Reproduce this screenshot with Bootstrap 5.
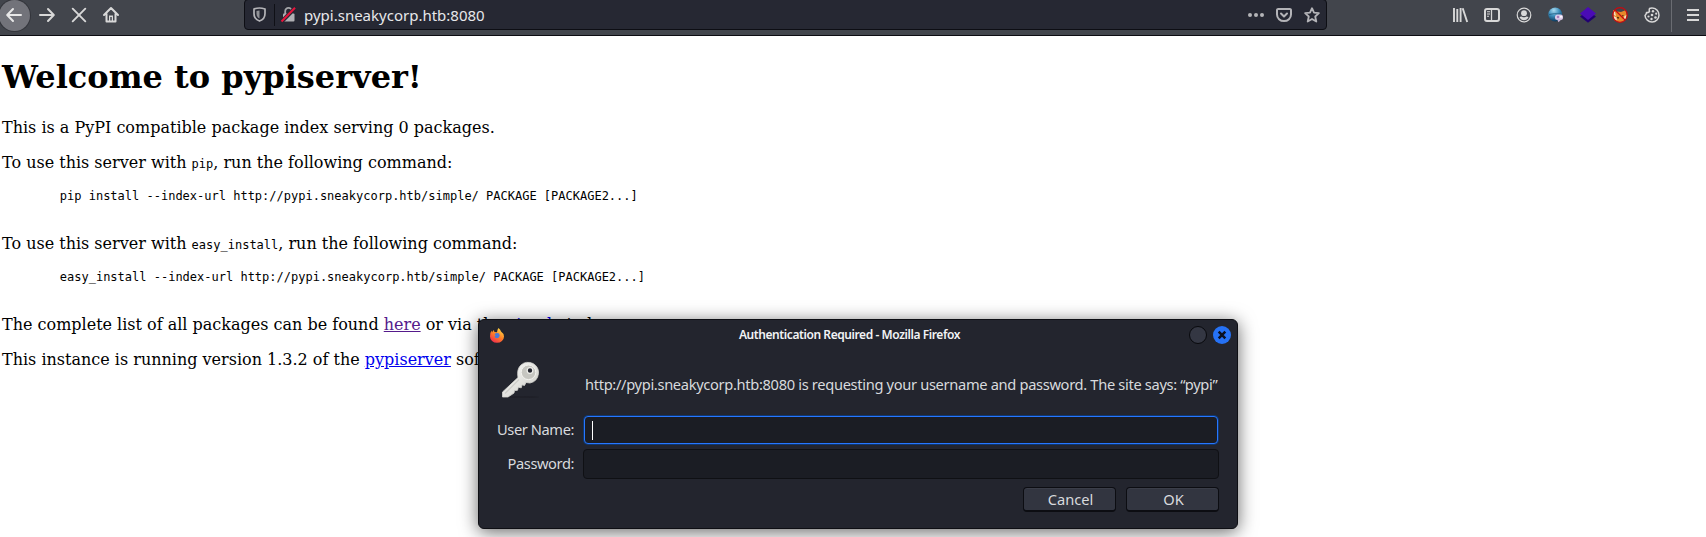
<!DOCTYPE html>
<html lang="en">
<head>
<meta charset="utf-8">
<title>Welcome to pypiserver!</title>
<meta name="viewport" content="width=device-width, initial-scale=1">
<link href="https://cdn.jsdelivr.net/npm/bootstrap@5.3.0/dist/css/bootstrap.min.css" rel="stylesheet">
<style>
  body { background: #fff; color: #000; height: 537px; overflow: hidden; position: relative; }
  svg { display: block; flex: none; overflow: visible; }
  .ui-font { font-family: "Noto Sans", sans-serif; font-size: 14.67px; line-height: 20px; }

  .toolbar { height: 36px; background: #42454c; border-bottom: 1px solid #0c0c12; }
  .tool { width: 32px; height: 30px; flex: none; color: #d8d8d8; }
  .nav-tools { width: 246px; margin-left: -2px; flex: none; }
  .nav-tools .tool:first-child { margin-right: 1px; }
  .back-disc { width: 31px; height: 31px; background: #72737a; box-shadow: 0 0 0 1px #33353b; flex: none; }
  .urlbar { width: 1083px; height: 31px; flex: none; margin-top: -1px; padding-right: 6px; background: #262833; border: 1px solid #0d0e14; border-radius: 4px; color: #e6e7ea; }
  .urlbar .sep { width: 1px; height: 22px; background: #0f1016; margin: 0 7px 0 8px; }
  .urlbar .dim { color: #b4b4b8; }
  .page-actions { gap: 12px; }
  .addr { font-size: 15px; margin-left: 9px; }
  .ext-tools { margin-left: 117px; flex: none; }
  .bar-sep { width: 1px; height: 32px; background: #6a6c72; margin: 0 8px 0 3px; }
  .menu-tool { width: 26px; }

  .doc { font: 16px/19px "DejaVu Serif", serif; padding: 23px 2px 0; }
  .doc h1 { font: bold 32px/37px "DejaVu Serif", serif; margin: 0 0 22px; }
  .doc p { margin: 0 0 16px; }
  .doc code, .doc pre { font-family: "DejaVu Sans Mono", monospace; font-size: 12px; color: #000; }
  .doc code { line-height: 1; }
  .doc pre { line-height: 15px; height: 30px; margin: 0 0 16px; overflow: visible; padding-top: 1px; }
  .doc a { color: #0000ee; text-decoration: underline; }
  .doc a.seen { color: #551a8b; }

  .dlg { position: absolute; left: 478px; top: 319px; width: 760px; height: 210px; background: #23252e; border: 1px solid #0e0f14; border-radius: 6px; box-shadow: 0 3px 18px rgba(0,0,0,.6); color: #d8dadd; }
  .dlg-title { height: 30px; padding: 0 6px 0 10px; margin-bottom: 2px; }
  .dlg-title h2 { font: 600 12px/16px "Noto Sans", sans-serif; letter-spacing: -.42px; color: #f2f3f5; padding-left: 5px; }
  .dlg-msg { height: 63px; padding-left: 23px; letter-spacing: -.33px; }
  .dlg-msg svg { margin-top: -8px; }
  .dlg-msg span { margin-left: 46px; }
  .fld-row { padding-right: 18px; margin-bottom: 4px; }
  .fld-row label { width: 95px; text-align: right; margin: -2px 9px 0 0; letter-spacing: -.42px; }
  .fld { flex: 1; background: #1b1d24; border: 1px solid #0f1014; border-radius: 4px; height: 30px; }
  .fld.focused { height: 28px; border-color: #2777ff; box-shadow: 0 0 0 1px #10376f; margin: 1px; }
  .caret { width: 1px; height: 19px; background: #fff; margin-left: 7px; }
  .dlg-actions { gap: 10px; margin-top: 8px; padding-right: 18px; }
  .dbtn { width: 93px; height: 25px; background: #323540; border: 1px solid #0c0d12; border-bottom-width: 2px; border-radius: 4px; color: #d8dadd; padding: 0 0 0 2px; box-shadow: inset 0 1px 0 #3b3e49; }
</style>
</head>
<body>
<header class="toolbar ui-font d-flex align-items-start">
  <div class="nav-tools d-flex">
    <div class="tool d-flex align-items-center justify-content-center"><div class="back-disc rounded-circle d-flex align-items-center justify-content-center">
      <svg width="16" height="16" viewBox="0 0 16 16" fill="none" stroke="#e8e8e8" stroke-width="2" stroke-linecap="round" stroke-linejoin="round"><path d="M15 8H1.500M7 2 1.200 8 7 14"/></svg></div></div>
    <div class="tool d-flex align-items-center justify-content-center">
      <svg width="16" height="16" viewBox="0 0 16 16" fill="none" stroke="currentColor" stroke-width="2" stroke-linecap="round" stroke-linejoin="round"><path d="M1 8h13.500M9 2l5.800 6L9 14"/></svg></div>
    <div class="tool d-flex align-items-center justify-content-center">
      <svg width="16" height="16" viewBox="0 0 16 16" fill="none" stroke="currentColor" stroke-width="1.900" stroke-linecap="round"><path d="M1.700 1.700l12.600 12.600M14.300 1.700 1.700 14.300"/></svg></div>
    <div class="tool d-flex align-items-center justify-content-center">
      <svg width="16" height="16" viewBox="0 0 16 16" fill="none" stroke="currentColor" stroke-width="2" stroke-linecap="round" stroke-linejoin="round"><path d="M1 8l7-7 7 7M3.500 7v7.500h9V7"/><path d="M8 14V8.500" stroke-width="4" stroke-linecap="butt"/><path d="M8 10v3.500" stroke="#42454c" stroke-width="1.500" stroke-linecap="butt"/></svg></div>
  </div>

  <div class="urlbar d-flex align-items-center">
    <svg class="dim ms-2" width="13" height="15" viewBox="0 0 13 15"><path d="M6.500 1C9 1 10.500 1.500 12 2v4.500c0 4-2.500 6.500-5.500 7.500C3.500 13 1 10.500 1 6.500V2c1.500-.5 3-1 5.500-1z" fill="none" stroke="currentColor" stroke-width="1.700"/><path d="M6.500 3.500V11.500C4.500 10.500 3.500 9 3.500 6.500V4z" fill="currentColor" opacity=".75"/></svg>
    <div class="sep"></div>
    <svg width="13" height="15" viewBox="0 0 13 15"><path d="M3.200 7V4.200a3.300 3.300 0 0 1 6.600 0V7" fill="none" stroke="#a4a5a9" stroke-width="1.800"/><rect x="1" y="6.500" width="11.500" height="8" rx="1" fill="#b0b0b4"/><path d="M-.3 14.700 13 1" stroke="#262833" stroke-width="4"/><path d="M-.5 14.500 13 .8" stroke="#e8143c" stroke-width="2"/></svg>
    <span class="addr">pypi.sneakycorp.htb:8080</span>
    <div class="page-actions dim d-flex align-items-center ms-auto">
      <svg width="16" height="16" viewBox="0 0 16 16" fill="currentColor"><circle cx="2" cy="8" r="2"/><circle cx="8" cy="8" r="2"/><circle cx="14" cy="8" r="2"/></svg>
      <svg width="16" height="16" viewBox="0 0 16 16" fill="none" stroke="currentColor" stroke-width="2" stroke-linecap="round" stroke-linejoin="round"><path d="M2.300 2h11.400A1.200 1.200 0 0 1 15 3.200V7.500a7 6.600 0 0 1-14 0V3.200A1.200 1.200 0 0 1 2.300 2z"/><path d="M5 6.500l3 3 3-3"/></svg>
      <svg width="16" height="16" viewBox="0 0 16 16" fill="none" stroke="currentColor" stroke-width="1.800" stroke-linejoin="round"><path d="M8 1.200l2 4.500 4.900.5-3.700 3.300 1.100 5L8 12l-4.300 2.500 1.100-5L1.100 6.200 6 5.700z"/></svg>
    </div>
  </div>

  <div class="ext-tools d-flex">
    <div class="tool d-flex align-items-center justify-content-center"><svg width="16" height="16" viewBox="0 0 16 16" fill="none" stroke="currentColor" stroke-width="1.900"><path d="M2 1v14M5.300 2v13M8.600 1v14M10.700 1.300 15.200 15"/></svg></div>
    <div class="tool d-flex align-items-center justify-content-center"><svg width="16" height="16" viewBox="0 0 16 16" fill="none" stroke="currentColor"><rect x="1" y="2" width="14" height="12" rx="2" stroke-width="2"/><path d="M7.500 2v12" stroke-width="1.300"/><path d="M3 4.700h3M3 7h3M3 9.300h2" stroke-width="1.100"/></svg></div>
    <div class="tool d-flex align-items-center justify-content-center"><svg width="16" height="16" viewBox="0 0 16 16"><circle cx="8" cy="8" r="6.800" fill="none" stroke="currentColor" stroke-width="1.200"/><circle cx="8" cy="6.200" r="2.900" fill="currentColor"/><path d="M3.500 10.200Q5 9 6 9.700q2 1 4 0 1-.7 2.500.5Q11 13.200 8 13.200t-4.500-3z" fill="currentColor"/></svg></div>
    <div class="tool d-flex align-items-center justify-content-center"><svg width="16" height="16" viewBox="0 0 16 16"><defs><radialGradient id="gl" cx=".4" cy=".2" r=".8"><stop offset="0" stop-color="#a9daef"/><stop offset=".5" stop-color="#3d8fbc"/><stop offset="1" stop-color="#0c3a5e"/></radialGradient></defs><circle cx="7.200" cy="7.500" r="6.900" fill="url(#gl)"/><path d="M1 7.500q5-1.500 12-.5" fill="none" stroke="#1b5478" stroke-width=".7"/><rect x="7" y="7.500" width="8" height="5.500" rx="2.500" fill="#dccbe8"/><path d="M9 12l1.500 3.300 3-3z" fill="#cdb8dc"/><circle cx="10" cy="10" r="1.200" fill="#a67cba"/><circle cx="13" cy="9.800" r="1" fill="#fff"/></svg></div>
    <div class="tool d-flex align-items-center justify-content-center"><svg width="16" height="16" viewBox="0 0 16 16"><path d="M0 9.500 8 4l8 5.500-8 6.300z" fill="#210072"/><path d="M0 6.500 8 0l8 6.500L8 13z" fill="#4a0bb5"/></svg></div>
    <div class="tool d-flex align-items-center justify-content-center"><svg width="16" height="16" viewBox="0 0 16 16"><path d="M1 3l4 1.500 4 .5 5-2 .8 6-2 5-5 1.500-5-2L1.500 9z" fill="#e8882b"/><path d="M1 4l1 4 2 1-1-4zM1.500 9l3 1.500.5 3-2.500-1zM14.500 8l-2 1-1 4 2-1z" fill="#f7dfc2"/><path d="M5 10.500l2 .5M10 9l1.500-.5" stroke="#54300f" stroke-width="1.300"/><circle cx="8" cy="8" r="7.300" fill="none" stroke="#c80a10" stroke-width="1.200"/><path d="M3 3l10 10" stroke="#c80a10" stroke-width="1.200"/></svg></div>
    <div class="tool d-flex align-items-center justify-content-center"><svg width="16" height="16" viewBox="0 0 16 16"><path d="M8.500 1A7 7 0 1 1 1 8.500Q2.500 7 2.500 5.500 4.500 6 5.500 4.500 4.800 3 5.500 1.500 7 .8 8.500 1z" fill="none" stroke="currentColor" stroke-width="1.500" stroke-linejoin="round"/><g fill="currentColor"><circle cx="9" cy="4.300" r="1.200"/><circle cx="12.200" cy="6.700" r="1.100"/><circle cx="8" cy="8" r="1.300"/><circle cx="4.500" cy="9.500" r="1.100"/><circle cx="11.500" cy="10.500" r="1.300"/><circle cx="7.500" cy="12" r="1.200"/></g></svg></div>
    <div class="bar-sep"></div>
    <div class="tool menu-tool d-flex align-items-center justify-content-center"><svg width="12" height="14" viewBox="0 0 12 14" stroke="currentColor" stroke-width="2"><path d="M0 2h12M0 7h12M0 12h12"/></svg></div>
  </div>
</header>

<main class="doc">
<h1>Welcome to pypiserver!</h1>
<p>This is a PyPI compatible package index serving 0 packages.</p>
<p>To use this server with <code>pip</code>, run the following command:</p>
<pre>        pip install --index-url http://pypi.sneakycorp.htb/simple/ PACKAGE [PACKAGE2...]
</pre>
<p>To use this server with <code>easy_install</code>, run the following command:</p>
<pre>        easy_install --index-url http://pypi.sneakycorp.htb/simple/ PACKAGE [PACKAGE2...]
</pre>
<p>The complete list of all packages can be found <a class="seen" href="#">here</a> or via the <a href="#">simple</a> index.</p>
<p>This instance is running version 1.3.2 of the <a href="#">pypiserver</a> software.</p>
</main>

<section class="dlg ui-font" role="dialog" aria-labelledby="dlg-heading">
  <div class="dlg-title d-flex align-items-center">
    <svg width="16" height="16" viewBox="0 0 16 16"><defs><linearGradient id="ff" x1=".8" y1="0" x2=".2" y2="1"><stop offset="0" stop-color="#ffe14a"/><stop offset=".5" stop-color="#ff8126"/><stop offset="1" stop-color="#f0264f"/></linearGradient></defs><path d="M9.500 1q2 1.500 2.500 3.500 3 2 3 5a7 6.300 0 0 1-14 0Q.8 6 2.500 3.500l.5 2L4.500 3l1 2 2.500.3Q8.300 2.500 9.500 1z" fill="url(#ff)"/><path d="M5.500 7q2-1.500 4.500-.5 1.500 2 0 3.800-2 1.500-4 .3Q5 9.500 6.500 8.500z" fill="#4a7bd8"/></svg>
    <h2 id="dlg-heading" class="mb-0 flex-grow-1 text-center">Authentication Required - Mozilla Firefox</h2>
    <svg width="42" height="18" viewBox="0 0 42 18"><circle cx="9" cy="9" r="8.500" fill="#343743" stroke="#08090d"/><circle cx="33" cy="9" r="9" fill="#2672f5"/><path d="M29.700 5.700l6.600 6.600M36.300 5.700l-6.600 6.600" stroke="#0b1020" stroke-width="2.500"/></svg>
  </div>
  <div class="dlg-msg d-flex align-items-center">
    <svg width="37" height="37" viewBox="0 0 37 37"><defs><linearGradient id="ky" x1="0" y1="0" x2="1" y2="1"><stop offset="0" stop-color="#fff"/><stop offset="1" stop-color="#c9c9c2"/></linearGradient></defs><ellipse cx="20" cy="36" rx="17" ry="1" fill="#1f2028"/><path d="M16 16.500Q14.500 8 19 4q5-4.500 12-1.500 6 3.500 5.500 10-1 8-8.500 9.500l-4-.5-1.500 3-2.500-.7-.7 3-3-.5-.8 3-3 .3-.5 2.500L6 36H.5v-5z" fill="url(#ky)" stroke="#d6d6d0" stroke-width=".8"/><circle cx="26.500" cy="11.300" r="7.300" fill="#c6c6c1" stroke="#f3f3ef"/><path d="M3 32.500 17 18.500" stroke="#cfcfca" stroke-width="1.500"/><circle cx="28" cy="9.500" r="2.800" fill="#23252e" stroke="#efefec" stroke-width="1.200"/></svg>
    <span class="text-nowrap">http://pypi.sneakycorp.htb:8080 is requesting your username and password. The site says: “pypi”</span>
  </div>
  <div class="fld-row d-flex align-items-center">
    <label>User Name:</label>
    <div class="fld focused d-flex align-items-center"><div class="caret"></div></div>
  </div>
  <div class="fld-row d-flex align-items-center">
    <label>Password:</label>
    <div class="fld"></div>
  </div>
  <div class="dlg-actions d-flex justify-content-end">
    <button class="dbtn d-flex align-items-center justify-content-center" type="button">Cancel</button>
    <button class="dbtn d-flex align-items-center justify-content-center" type="button">OK</button>
  </div>
</section>
<script src="https://cdn.jsdelivr.net/npm/bootstrap@5.3.0/dist/js/bootstrap.bundle.min.js"></script>
</body>
</html>
